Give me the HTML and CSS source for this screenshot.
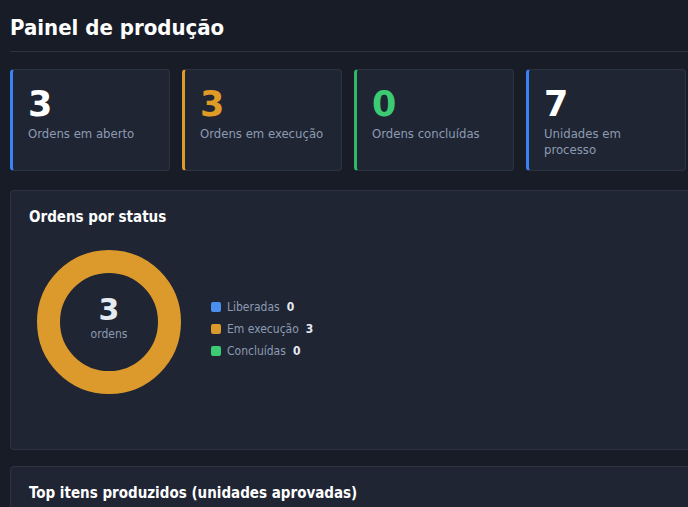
FILE: index.html
```html
<!DOCTYPE html>
<html lang="pt-BR">
<head>
<meta charset="utf-8">
<title>Painel de produção</title>
<link rel="stylesheet" href="styles.css">
</head>
<body>
<main class="page">
  <header class="page-header">
    <h1 class="page-title">Painel de produção</h1>
  </header>

  <section class="kpis">
    <div class="kpi kpi-blue">
      <div class="kpi-value">3</div>
      <div class="kpi-label">Ordens em aberto</div>
    </div>
    <div class="kpi kpi-orange">
      <div class="kpi-value val-orange">3</div>
      <div class="kpi-label">Ordens em execução</div>
    </div>
    <div class="kpi kpi-green">
      <div class="kpi-value val-green">0</div>
      <div class="kpi-label">Ordens concluídas</div>
    </div>
    <div class="kpi kpi-blue">
      <div class="kpi-value">7</div>
      <div class="kpi-label">Unidades em processo</div>
    </div>
  </section>

  <section class="panel panel-status">
    <h2 class="panel-title">Ordens por status</h2>
    <div class="status-body">
      <div class="donut">
        <svg class="donut-svg" width="144" height="144" viewBox="0 0 144 144">
          <circle cx="72" cy="72" r="60.5" fill="none" stroke="#dc9a2c" stroke-width="23"/>
        </svg>
        <div class="donut-center">
          <div class="donut-value">3</div>
          <div class="donut-label">ordens</div>
        </div>
      </div>
      <ul class="legend">
        <li class="legend-item"><span class="swatch sw-blue"></span><span class="legend-name">Liberadas</span><strong class="legend-val">0</strong></li>
        <li class="legend-item"><span class="swatch sw-orange"></span><span class="legend-name">Em execução</span><strong class="legend-val">3</strong></li>
        <li class="legend-item"><span class="swatch sw-green"></span><span class="legend-name">Concluídas</span><strong class="legend-val">0</strong></li>
      </ul>
    </div>
  </section>

  <section class="panel panel-top">
    <h2 class="panel-title">Top itens produzidos (unidades aprovadas)</h2>
  </section>
</main>
</body>
</html>
```

FILE: styles.css
```css
html, body {
  margin: 0;
  padding: 0;
  overflow: hidden;
  background: #181c26;
}
body {
  font-family: "DejaVu Sans Condensed", "DejaVu Sans", sans-serif;
  color: #e6ebf2;
}
.page {
  width: 760px;
  padding: 0 10px;
}
.page-header {
  padding-top: 14px;
  padding-bottom: 9px;
  border-bottom: 1px solid #2c3444;
}
.page-title {
  margin: 0;
  font-size: 22px;
  line-height: 28px;
  font-weight: 700;
  color: #ffffff;
}
.kpis {
  display: flex;
  gap: 12px;
  margin-top: 17px;
}
.kpi {
  box-sizing: border-box;
  width: 160px;
  height: 102px;
  background: #1f2533;
  border: 1px solid #2c3444;
  border-left: 3px solid #3b82f6;
  border-radius: 4px;
  padding: 0 16px 0 15px;
}
.kpi-blue { border-left-color: #3b82f6; }
.kpi-orange { border-left-color: #e09b27; }
.kpi-green { border-left-color: #2fb866; }
.kpi-value {
  font-family: "DejaVu Sans", sans-serif;
  font-size: 35px;
  font-weight: 700;
  line-height: 40px;
  margin-top: 14px;
  color: #ffffff;
}
.val-orange { color: #e09b27; }
.val-green { color: #3ccb72; }
.kpi-label {
  font-size: 13px;
  line-height: 16px;
  margin-top: 2px;
  color: #8d9bb2;
}
.panel {
  background: #1f2533;
  border: 1px solid #2c3444;
  border-radius: 4px;
  padding: 16px 18px;
  box-sizing: border-box;
}
.panel-status {
  margin-top: 19px;
  height: 260px;
}
.panel-top {
  margin-top: 16px;
  height: 80px;
}
.panel-title {
  margin: 0;
  font-size: 15px;
  line-height: 20px;
  font-weight: 700;
  color: #ffffff;
}
.status-body {
  display: flex;
  align-items: center;
  gap: 30px;
  margin-top: 23px;
  padding-left: 8px;
}
.donut {
  position: relative;
  width: 144px;
  height: 144px;
}
.donut-svg { display: block; }
.donut-center {
  position: absolute;
  inset: 0;
  display: flex;
  flex-direction: column;
  align-items: center;
  justify-content: center;
  padding-bottom: 8px;
}
.donut-value {
  font-family: "DejaVu Sans", sans-serif;
  font-size: 30px;
  font-weight: 700;
  line-height: 32px;
  color: #e6ebf2;
}
.donut-label {
  font-size: 12px;
  line-height: 16px;
  color: #8d9bb2;
}
.legend {
  list-style: none;
  margin: 14px 0 0;
  padding: 0;
  display: flex;
  flex-direction: column;
  gap: 6px;
}
.legend-item {
  display: flex;
  align-items: center;
  font-size: 12px;
  line-height: 16px;
  color: #8d9bb2;
}
.swatch {
  width: 10px;
  height: 10px;
  border-radius: 2px;
  margin-right: 6px;
}
.sw-blue { background: #4a8ff0; }
.sw-orange { background: #dc9a2c; }
.sw-green { background: #3ccb72; }
.legend-val {
  margin-left: 7px;
  color: #e6ebf2;
  font-weight: 700;
}
```
